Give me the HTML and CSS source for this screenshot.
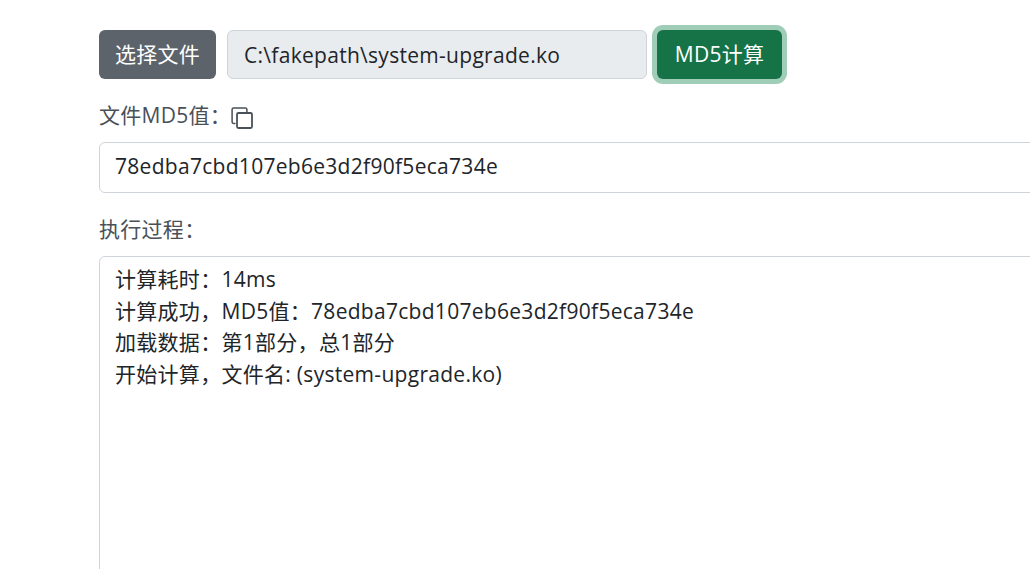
FILE: index.html
```html
<!DOCTYPE html>
<html lang="zh-CN">

<head>
    <meta charset="UTF-8">
    <title>MD5计算</title>
    <link rel="stylesheet" href="styles.css">
</head>

<body>
    <div class="page">
        <div class="file-row">
            <button class="btn btn-grey">选择文件</button>
            <input class="file-name" type="text" value="C:\fakepath\system-upgrade.ko" readonly>
            <button class="btn btn-green">MD5计算</button>
        </div>

        <div class="label label-md5">
            文件MD5值：
            <svg class="copy-icon" width="24" height="24" viewBox="0 0 24 24" fill="none" stroke="#495057" stroke-width="1.5">
                <path d="M6.5 18.5h-2a1.4 1.4 0 0 1-1.4-1.4V4.4A1.4 1.4 0 0 1 4.500 3h12a1.400 1.400 0 0 1 1.400 1.400V7"/>
                <rect x="8" y="8" width="15" height="15" rx="1.400" stroke-width="1.800"/>
            </svg>
        </div>
        <input class="text-box" type="text" value="78edba7cbd107eb6e3d2f90f5eca734e" readonly>

        <div class="label label-log">执行过程：</div>
        <div class="log-box">
            <div>计算耗时：14ms</div>
            <div>计算成功，MD5值：78edba7cbd107eb6e3d2f90f5eca734e</div>
            <div>加载数据：第1部分，总1部分</div>
            <div>开始计算，文件名: (system-upgrade.ko)</div>
        </div>
    </div>
</body>

</html>
```
FILE: styles.css
```css
* {
    margin: 0;
    padding: 0;
    box-sizing: border-box;
}

html,
body {
    height: 100%;
    overflow: hidden;
    background: #fff;
}

body {
    font-family: "Open Sans", "Noto Sans CJK SC", sans-serif;
    font-size: 21px;
    line-height: 31.5px;
    letter-spacing: 0.29px;
    color: #212529;
}

.page {
    width: 1200px;
    padding: 30px 0 0 99px;
}

.file-row {
    display: flex;
    align-items: center;
}

.btn {
    height: 49px;
    padding: 0;
    border: 1px solid transparent;
    border-radius: 6px;
    font: inherit;
    letter-spacing: inherit;
    white-space: nowrap;
    color: #fff;
}

.btn-grey {
    width: 117px;
    background: #5c636a;
}

.btn-green {
    width: 125px;
    margin-left: 10px;
    background: #157347;
    box-shadow: 0 0 0 5px #a0cdb8;
}

.file-name {
    width: 420px;
    height: 49px;
    margin-left: 11px;
    padding: 0 16px;
    border: 1px solid #ced4da;
    border-radius: 6px;
    background: #e9ecef;
    font: inherit;
    letter-spacing: inherit;
    color: #212529;
}

.label {
    display: flex;
    align-items: center;
    color: #495057;
}

.label-md5 {
    margin-top: 21px;
    height: 31px;
}

.label-log {
    margin-top: 21px;
    height: 31px;
}

.copy-icon {
    margin-left: -2px;
    margin-top: 3px;
}

.text-box {
    display: block;
    width: 1050px;
    height: 51px;
    margin-top: 11px;
    padding: 0 16px 3px 15px;
    border: 1px solid #ced4da;
    border-radius: 6px;
    font: inherit;
    letter-spacing: inherit;
    color: #212529;
}

.log-box {
    width: 1050px;
    height: 400px;
    margin-top: 11px;
    padding: 7px 16px 7px 15px;
    border: 1px solid #ced4da;
    border-radius: 6px;
}
```
